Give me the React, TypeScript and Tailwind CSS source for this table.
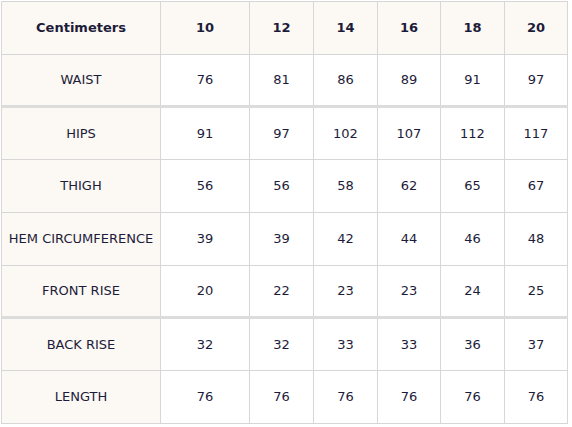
const sizes = ["10", "12", "14", "16", "18", "20"];

const rows: { label: string; values: number[]; thick?: boolean }[] = [
  { label: "WAIST", values: [76, 81, 86, 89, 91, 97], thick: true },
  { label: "HIPS", values: [91, 97, 102, 107, 112, 117] },
  { label: "THIGH", values: [56, 56, 58, 62, 65, 67] },
  { label: "HEM CIRCUMFERENCE", values: [39, 39, 42, 44, 46, 48] },
  { label: "FRONT RISE", values: [20, 22, 23, 23, 24, 25], thick: true },
  { label: "BACK RISE", values: [32, 32, 33, 33, 36, 37] },
  { label: "LENGTH", values: [76, 76, 76, 76, 76, 76] },
];

const colWidths = ["w-[159px]", "w-[89px]", "w-[64px]", "w-[64px]", "w-[63px]", "w-[64px]", "w-[63px]"];

const App = () => {
  return (
    <div className="min-h-screen bg-white p-px font-['Verdana','DejaVu_Sans',sans-serif] text-[13px] text-[#1c1c3a]">
      <table className="w-[567px] table-fixed border-collapse border border-[#d6d6d6]">
        <colgroup>
          {colWidths.map((w, i) => (
            <col key={i} className={w} />
          ))}
        </colgroup>
        <thead>
          <tr className="h-[53px] bg-[#fcf8f3]">
            <th className="border border-[#d6d6d6] text-center font-bold">Centimeters</th>
            {sizes.map((s) => (
              <th key={s} className="border border-[#d6d6d6] text-center font-bold">
                {s}
              </th>
            ))}
          </tr>
        </thead>
        <tbody>
          {rows.map((r) => (
            <tr
              key={r.label}
              className={r.thick ? "h-[52px] border-b-[3px] border-b-[#dcdcdc]" : "h-[53px]"}
            >
              <td className="border-x border-t border-[#d6d6d6] bg-[#fcf8f3] text-center whitespace-nowrap">
                {r.label}
              </td>
              {r.values.map((v, i) => (
                <td key={i} className="border-x border-t border-[#d6d6d6] text-center">
                  {v}
                </td>
              ))}
            </tr>
          ))}
        </tbody>
      </table>
    </div>
  );
};

export default App;
